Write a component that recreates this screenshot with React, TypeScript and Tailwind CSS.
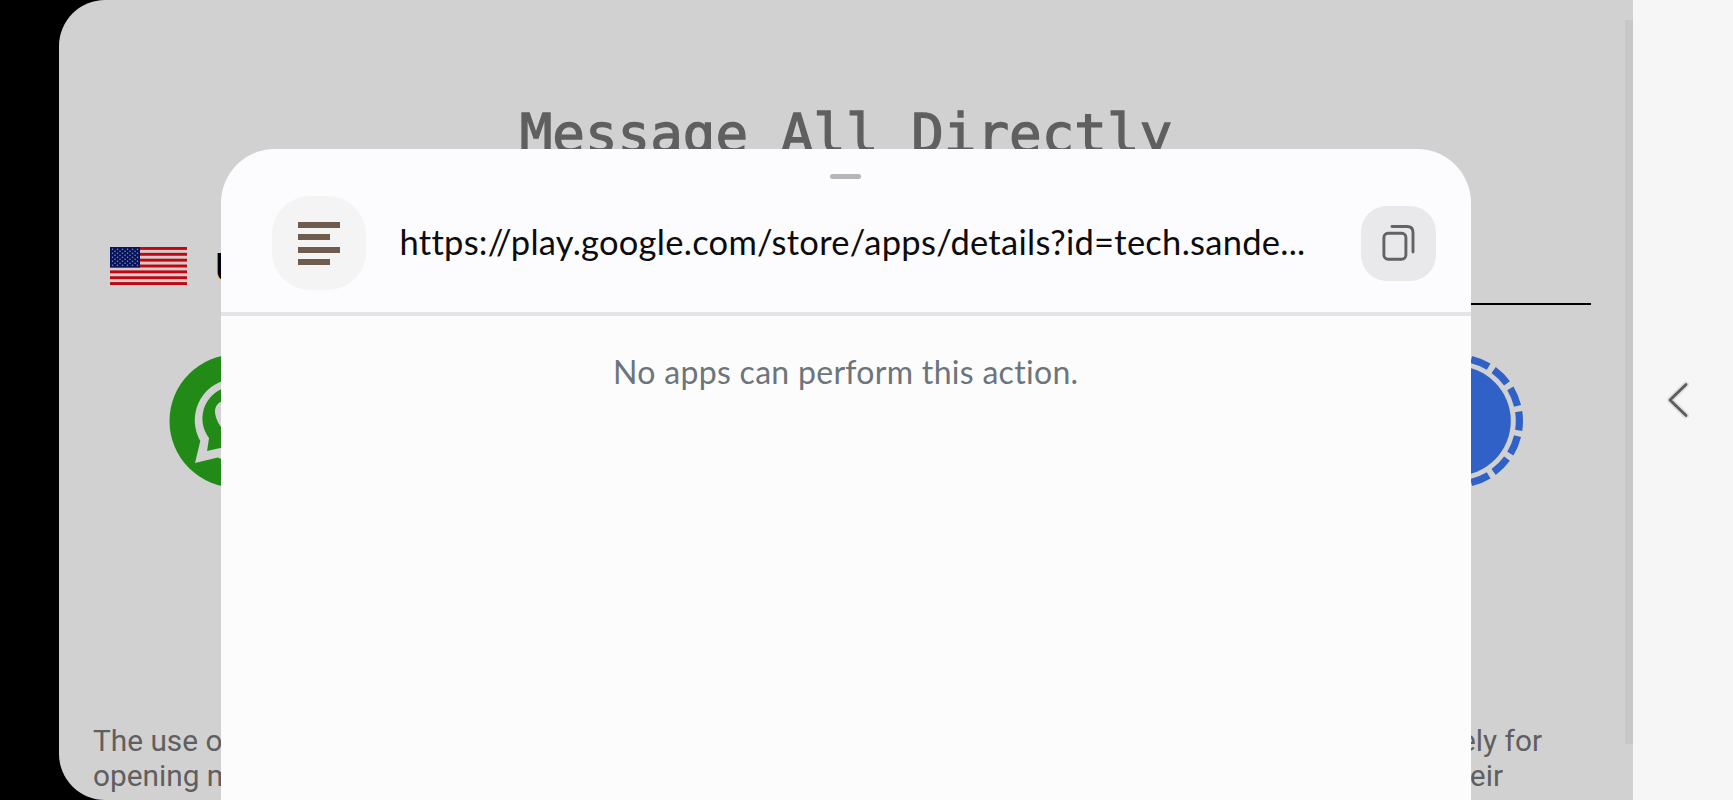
const footer = [
  { start: "The use of", end: "solely for" },
  { start: "opening mes", end: "their" },
];

function UsFlag() {
  return (
    <svg viewBox="0 0 77 38" className="h-[38px] w-[77px]" preserveAspectRatio="none">
      <rect width="77" height="38" fill="#d3cdce" />
      {[0, 1, 2, 3, 4, 5, 6].map((i) => (
        <rect key={i} y={i * 5.85} width="77" height="2.9" fill="#bf0712" />
      ))}
      <rect width="30" height="20.5" fill="#07145c" />
      {[0, 1, 2, 3, 4, 5, 6, 7, 8].map((row) =>
        (row % 2 ? [0, 1, 2, 3, 4] : [0, 1, 2, 3, 4, 5]).map((col) => (
          <circle
            key={`${row}-${col}`}
            cx={2.5 + col * 5 + (row % 2 ? 2.5 : 0)}
            cy={2.2 + row * 2}
            r="0.75"
            fill="#8b93ad"
          />
        ))
      )}
    </svg>
  );
}

function WhatsAppIcon() {
  return (
    <svg viewBox="0 0 134 134" className="size-[134px]">
      <circle cx="67" cy="67" r="66.5" fill="#228b17" />
      <path
        d="M26 109 L31.3 87 A41.6 41.6 0 1 1 48.8 103.5 Z"
        fill="#d1d1d1"
      />
      <path
        d="M38.1 97 L40 84 A32.2 32.2 0 1 1 52.3 93.8 Z"
        fill="#228b17"
      />
      <path
        d="M46 57 C46 52 50 47.5 53.5 47.5 h3 l5 11 -4 6 c4 7 8 10 15 13 l5-5 11 5 c0 7-6 11-12 11 C60 86 46 70 46 57 Z"
        fill="#d1d1d1"
      />
    </svg>
  );
}

function SignalIcon() {
  return (
    <svg viewBox="0 0 134 134" className="size-[134px]">
      <circle cx="67" cy="67" r="54.8" fill="#2f61c6" />
      <circle
        cx="67"
        cy="67"
        r="63.4"
        fill="none"
        stroke="#2f61c6"
        strokeWidth="7.2"
        pathLength="160"
        strokeDasharray="7.6 2.4"
        strokeDashoffset="3.8"
      />
    </svg>
  );
}

function CopyIcon() {
  return (
    <svg
      viewBox="0 0 34 38"
      className="-ml-[1px] h-[38px] w-[34px]"
      fill="none"
      stroke="#636366"
      strokeWidth="2.9"
      strokeLinecap="round"
    >
      <rect x="2.9" y="9.3" width="22" height="26" rx="4.2" />
      <path d="M11 2.5 H26 Q32 2.5 32 8.5 V28" />
    </svg>
  );
}

function AppScreen() {
  return (
    <main className="relative flex w-[1574px] shrink-0 flex-col overflow-hidden rounded-l-[46px] bg-[#d1d1d1]">
      <h1 className="mt-[102px] whitespace-pre text-center font-['DejaVu_Sans_Mono','Liberation_Mono',monospace] text-[54.2px] leading-[64px] text-[#5f5f5f] [-webkit-text-stroke:1.3px_#5f5f5f]">
        Message All Directly
      </h1>

      <div className="ml-[51px] mr-[42px] mt-[81px] flex h-[38px] items-center">
        <UsFlag />
        <span className="ml-[28px] mt-[4px] font-[Roboto,sans-serif] text-[38px] leading-none text-black">
          United States
        </span>
      </div>
      <div className="ml-[300px] mr-[42px] mt-[18px] h-[2px] shrink-0 bg-black" />

      <div className="ml-[110px] mr-[110px] mt-[49px] flex justify-between">
        <WhatsAppIcon />
        <SignalIcon />
      </div>

      <footer className="ml-[34px] mt-[235px] shrink-0 font-[Roboto,sans-serif] text-[29.8px] leading-[35px] text-[#5f5f5f]">
        {footer.map((line, i) => (
          <p
            key={line.end}
            className={`flex justify-between ${i === 0 ? "mr-[91px]" : "mr-[130px]"}`}
          >
            <span>{line.start}</span>
            <span>{line.end}</span>
          </p>
        ))}
      </footer>

      {/* Scrollbar */}
      <div className="absolute right-0 top-5 h-[724px] w-2 bg-[#c7c7c7]" />
    </main>
  );
}

function ShareSheet() {
  return (
    <section className="absolute left-[220.5px] top-[149px] flex h-[651px] w-[1250.5px] flex-col overflow-hidden rounded-t-[54px] bg-[#fcfcff]">
      <div className="mx-auto mt-[25px] h-[5px] w-[31px] shrink-0 rounded-full bg-[#b6b6b9]" />
      <header className="flex h-[133px] shrink-0 items-center pb-[9px] pl-[51px] pr-[35.5px]">
        <div className="mt-[3px] flex size-[94px] shrink-0 flex-col justify-center gap-[6.4px] rounded-[38px] bg-[#f4f4f4] pl-[26px] pt-[2px]">
          <span className="h-[6.2px] w-[42px] bg-[#705b4f]" />
          <span className="h-[6.2px] w-8 bg-[#705b4f]" />
          <span className="h-[6.2px] w-[42px] bg-[#705b4f]" />
          <span className="h-[6.2px] w-8 bg-[#705b4f]" />
        </div>
        <p className="ml-[34px] mt-[2px] whitespace-nowrap font-[Lato,sans-serif] text-[34.5px] leading-10 tracking-[0.27px] text-[#0c0c0e] [font-variant-ligatures:none]">
          https://play.google.com/store/apps/details?id=tech.sande...
        </p>
        <button
          aria-label="Copy"
          className="ml-auto mt-[4px] flex size-[75px] shrink-0 items-center justify-center rounded-[26px] bg-[#e9e9eb]"
        >
          <CopyIcon />
        </button>
      </header>
      <div className="h-1 shrink-0 bg-[#e4e4e6]" />
      <div className="flex-1 bg-[#fcfcfd] pt-[36px] text-center font-[Lato,sans-serif] text-[32px] leading-10 tracking-[0.3px] text-[#6c757b] [font-variant-ligatures:none]">
        No apps can perform this action.
      </div>
    </section>
  );
}

export default function App() {
  return (
    <div className="relative flex h-[800px] w-[1733px] overflow-hidden bg-black">
      <div className="w-[59px] shrink-0" />
      <AppScreen />
      <nav className="flex w-[100px] shrink-0 items-center justify-center bg-[#f6f6f6]">
        <button aria-label="Back" className="-ml-[10px]">
          <svg
            viewBox="0 0 24 38"
            className="h-[38px] w-6"
            fill="none"
            strokeLinecap="round"
            strokeLinejoin="round"
          >
            <path d="M20 3.5 L4 19 L20 34.5" stroke="#dfdfdf" strokeWidth="6" />
            <path d="M20 3.5 L4 19 L20 34.5" stroke="#5c5c5c" strokeWidth="2.8" />
          </svg>
        </button>
      </nav>
      <ShareSheet />
    </div>
  );
}
